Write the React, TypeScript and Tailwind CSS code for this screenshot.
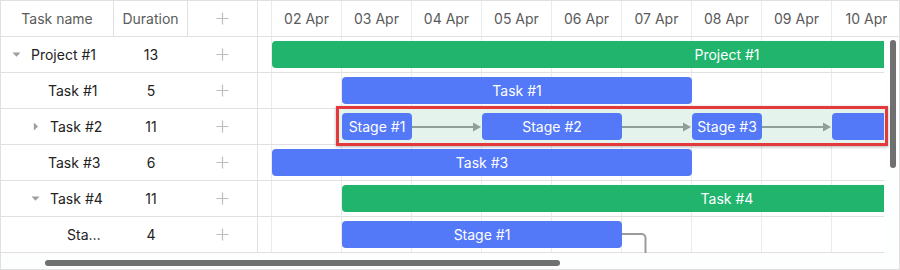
import React from "react";

type Caret = "down" | "right" | null;

interface TaskRow {
  name: string;
  duration: number;
  caret: Caret;
  pad: string;
}

interface Bar {
  row: number;
  start: number; // day index, 0 = 01 Apr
  days: number;
  label: string;
  color: "green" | "blue";
}

const DAYS = ["01 Apr", "02 Apr", "03 Apr", "04 Apr", "05 Apr", "06 Apr", "07 Apr", "08 Apr", "09 Apr", "10 Apr", "11 Apr"];
const COL = 70;
const SHIFT = -56; // chart is scrolled, 01 Apr is mostly out of view
const ROW = 36;

const rows: TaskRow[] = [
  { name: "Project #1", duration: 13, caret: "down", pad: "pl-[7px]" },
  { name: "Task #1", duration: 5, caret: null, pad: "pl-[47px]" },
  { name: "Task #2", duration: 11, caret: "right", pad: "pl-[26px]" },
  { name: "Task #3", duration: 6, caret: null, pad: "pl-[47px]" },
  { name: "Task #4", duration: 11, caret: "down", pad: "pl-[26px]" },
  { name: "Stage #1", duration: 4, caret: null, pad: "pl-[66px]" },
];

const bars: Bar[] = [
  { row: 0, start: 1, days: 13, label: "Project #1", color: "green" },
  { row: 1, start: 2, days: 5, label: "Task #1", color: "blue" },
  { row: 3, start: 1, days: 6, label: "Task #3", color: "blue" },
  { row: 4, start: 2, days: 11, label: "Task #4", color: "green" },
  { row: 5, start: 2, days: 4, label: "Stage #1", color: "blue" },
];

const stages = [
  { start: 2, days: 1, label: "Stage #1" },
  { start: 4, days: 2, label: "Stage #2" },
  { start: 7, days: 1, label: "Stage #3" },
  { start: 9, days: 2, label: "" },
];

const dayX = (d: number) => SHIFT + d * COL;

function Plus() {
  return (
    <svg width="13" height="13" viewBox="0 0 13 13" aria-hidden="true">
      <path d="M6.5 0.5v12M0.5 6.5h12" stroke="#bdbdbd" strokeWidth="1.2" />
    </svg>
  );
}

function CaretIcon({ dir }: { dir: "down" | "right" }) {
  return (
    <svg width="9" height="9" viewBox="0 0 9 9" aria-hidden="true">
      {dir === "down" ? (
        <path d="M0.5 2.5h8l-4 4.2z" fill="#9e9e9e" />
      ) : (
        <path d="M2.8 0.5v8l4.2-4z" fill="#9e9e9e" />
      )}
    </svg>
  );
}

export default function App() {
  return (
    <div className="box-border flex h-[270px] w-[900px] flex-col overflow-hidden border border-[#e0e0e0] bg-white font-['Inter',sans-serif] text-[14px] text-[#222]">
      <div className="flex min-h-0 flex-1">
        {/* grid */}
        <div className="flex w-[257px] shrink-0 flex-col border-r border-[#e0e0e0]">
          <div className="flex h-9 shrink-0 border-b border-[#e0e0e0] text-[#5a5a5a]">
            <div className="flex w-[113px] items-center justify-center border-r border-[#e0e0e0]">Task name</div>
            <div className="flex w-[74px] items-center justify-center border-r border-[#e0e0e0]">Duration</div>
            <div className="flex flex-1 items-center justify-center">
              <Plus />
            </div>
          </div>
          {rows.map((r) => (
            <div key={r.name + r.pad} className="flex h-9 shrink-0 items-center border-b border-[#e0e0e0]">
              <div className={`flex w-[113px] items-center overflow-hidden pr-[8px] ${r.pad}`}>
                {r.caret && (
                  <span className="mr-[6px] flex w-[17px] shrink-0 justify-center">
                    <CaretIcon dir={r.caret} />
                  </span>
                )}
                <span className="truncate">{r.name}</span>
              </div>
              <div className="w-[74px] text-center">{r.duration}</div>
              <div className="flex flex-1 justify-center">
                <Plus />
              </div>
            </div>
          ))}
        </div>

        {/* chart */}
        <div className="relative flex min-w-0 flex-1 flex-col">
          <div className="h-9 shrink-0 border-b border-[#e0e0e0] text-[#5a5a5a]">
            <div className="h-full w-[629px] overflow-hidden">
              <div className="flex h-full -ml-[56px]">
                {DAYS.map((d) => (
                  <div key={d} className="flex w-[70px] shrink-0 items-center justify-center whitespace-nowrap border-r border-[#ebebeb]">
                    {d}
                  </div>
                ))}
              </div>
            </div>
          </div>
          <div className="flex min-h-0 flex-1">
            <div className="relative w-[626px] shrink-0 overflow-hidden">
              {/* column lines */}
              <div className="absolute inset-0 flex -ml-[56px]">
                {DAYS.map((d) => (
                  <div key={d} className="h-full w-[70px] shrink-0 border-r border-[#ebebeb]" />
                ))}
              </div>
              {rows.map((r) => (
                <div key={r.name + r.pad} className="relative h-9 border-b border-[#e0e0e0]" />
              ))}

              {bars.map((b) => (
                <div
                  key={b.label + b.row}
                  className={`absolute z-20 flex h-[27px] items-center justify-center rounded-[4px] text-white ${
                    b.color === "green" ? "bg-[#20b46d]" : "bg-[#5379f8]"
                  }`}
                  style={{ left: dayX(b.start), width: b.days * COL, top: b.row * ROW + 4 }}
                >
                  {b.label}
                </div>
              ))}

              {stages.map((s) => (
                <div
                  key={s.start}
                  className="absolute z-20 flex h-[27px] items-center justify-center rounded-[4px] bg-[#5379f8] text-white"
                  style={{ left: dayX(s.start), width: s.days * COL, top: 2 * ROW + 4 }}
                >
                  {s.label}
                </div>
              ))}

              {/* links between stages */}
              <svg className="absolute left-0 z-20" width="626" height="36" style={{ top: 2 * ROW }} aria-hidden="true">
                {[
                  [154, 224],
                  [364, 434],
                  [504, 574],
                ].map(([x1, x2]) => (
                  <g key={x1}>
                    <path d={`M${x1} 18H${x2 - 8}`} stroke="#8fa098" strokeWidth="2" />
                    <path d={`M${x2 - 9} 13.5L${x2 - 1} 18L${x2 - 9} 22.5z`} fill="#8fa098" />
                  </g>
                ))}
              </svg>

              {/* link leaving the last stage */}
              <svg className="absolute left-0 z-20" width="626" height="40" style={{ top: 5 * ROW }} aria-hidden="true">
                <path d="M364 17H383.5a4 4 0 0 1 4 4V40" fill="none" stroke="#9b9b9b" strokeWidth="2" />
              </svg>
            </div>
            <div className="relative flex-1 bg-[#fdfefe]">
              <div className="absolute left-[6px] top-[3px] h-[128px] w-[6px] rounded-full bg-[#707070]" />
            </div>
          </div>

          {/* highlighted row */}
          <div className="absolute left-[78px] top-[105px] z-10 h-[40px] w-[552px] border-[3px] border-[#e4393c] bg-[#e4f3eb] shadow-[0_1px_3px_rgba(0,0,0,0.3)]" />
        </div>
      </div>

      {/* horizontal scrollbar */}
      <div className="relative h-[16px] shrink-0 bg-[#fdfefe]">
        <div className="absolute left-[44px] top-[7px] h-[6px] w-[515px] rounded-full bg-[#707070]" />
      </div>
    </div>
  );
}
